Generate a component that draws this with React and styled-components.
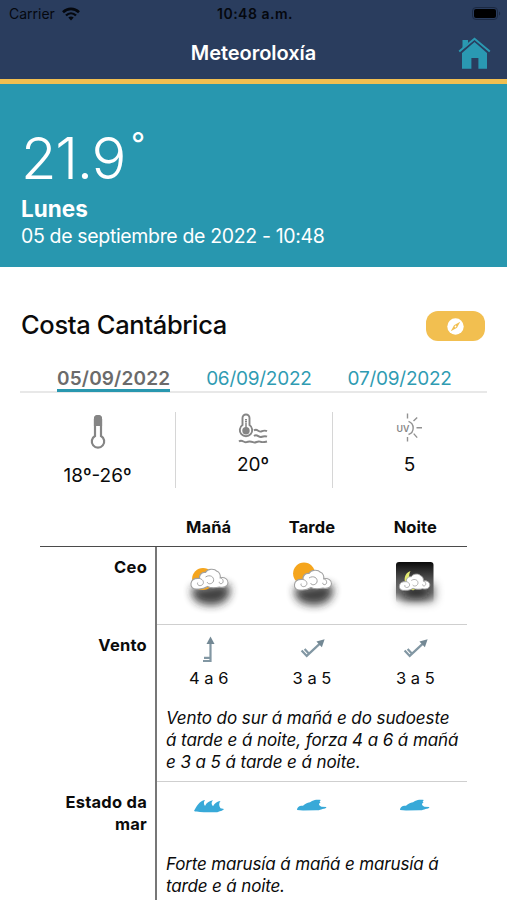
import React from "react";
import styled, { createGlobalStyle } from "styled-components";

const GlobalStyle = createGlobalStyle`
  * {
    box-sizing: border-box;
  }

  body {
    margin: 0;
    background: #fff;
    color: #0b0b0b;
    font-family: Inter, "Liberation Sans", sans-serif;
  }

  h1, h2, p {
    margin: 0;
  }

  svg {
    display: block;
  }
`;

const Screen = styled.div`
  width: 507px;
  height: 900px;
  overflow: hidden;
  background: #fff;
`;

const Header = styled.header`
  height: 84px;
  background: #2a3d5e;
  border-bottom: 5px solid #f2bf50;
`;

const StatusBar = styled.div`
  display: grid;
  grid-template-columns: 1fr auto 1fr;
  align-items: center;
  height: 27px;
  padding: 0 6px 0 9px;
  color: #05080e;
  font-size: 14px;
  line-height: 27px;

  strong {
    font-weight: 600;
    letter-spacing: 0.5px;
  }

  .carrier {
    display: flex;
    align-items: center;
    gap: 7px;
  }

  .battery {
    justify-self: end;
  }
`;

const NavBar = styled.div`
  display: grid;
  grid-template-columns: 1fr auto 1fr;
  align-items: center;
  height: 52px;
  padding: 0 16px;
`;

const NavTitle = styled.h1`
  grid-column: 2;
  color: #fff;
  font-size: 20px;
  font-weight: 600;
  letter-spacing: -0.05px;
`;

const HomeLink = styled.a`
  justify-self: end;
`;

const Hero = styled.section`
  height: 183px;
  padding: 40px 21px 0;
  background: #2897af;
  color: #fff;
`;

const Temperature = styled.div`
  display: flex;
  align-items: flex-start;
  height: 71px;
  font-size: 58px;
  font-weight: 300;
  line-height: 69px;
  letter-spacing: -1.3px;

  sup {
    margin-left: 6px;
    font-size: 31px;
    font-weight: 400;
    line-height: 40px;
  }
`;

const Weekday = styled.p`
  font-size: 22.5px;
  font-weight: 700;
  line-height: 27px;
`;

const Today = styled.p`
  padding-top: 1px;
  font-size: 19.5px;
  line-height: 27px;
  letter-spacing: -0.35px;
`;

const Area = styled.div`
  display: flex;
  align-items: center;
  justify-content: space-between;
  height: 60px;
  margin-top: 29px;
  padding: 0 22px 0 21px;
`;

const AreaName = styled.h2`
  padding-bottom: 3px;
  font-size: 25.5px;
  font-weight: 500;
  letter-spacing: -0.35px;
`;

const CompassButton = styled.button`
  display: flex;
  align-items: center;
  justify-content: center;
  width: 59px;
  height: 30px;
  padding: 0;
  border: 0;
  border-radius: 12px;
  background: #f2bf50;
`;

const Tabs = styled.nav`
  display: flex;
  height: 37px;
  margin: 0 20px;
  padding: 8px 0 0 37px;
  border-bottom: 2px solid #e8e8e8;
`;

const Tab = styled.a`
  height: 28px;
  margin-right: 36px;
  border-bottom: 3px solid ${({ $active }) => ($active ? "#2897af" : "transparent")};
  color: ${({ $active }) => ($active ? "#6b6b6b" : "#2f9bb2")};
  font-size: 19px;
  font-weight: ${({ $active }) => ($active ? 600 : 400)};
  line-height: 29px;
  letter-spacing: ${({ $active }) => ($active ? "0.15px" : "-0.25px")};
  white-space: nowrap;
`;

const Summary = styled.div`
  display: grid;
  grid-template-columns: 156px 157px 1fr;
  height: 76px;
  margin: 19px 20px 0;
`;

const SummaryItem = styled.div`
  display: flex;
  flex-direction: column;
  align-items: center;
  padding-right: ${({ $inset }) => $inset || 0}px;
  font-size: 19px;
  line-height: 24px;
  border-right: ${({ $last }) => ($last ? "0" : "1px solid #d6d6d6")};

  svg {
    margin-bottom: ${({ $gap }) => $gap}px;
  }
`;

const Forecast = styled.div`
  width: 427px;
  margin: 19px 0 0 40px;
`;

const TableHead = styled.div`
  display: grid;
  grid-template-columns: 117px repeat(3, 1fr);
  height: 40px;
  border-bottom: 1px solid #4b4b4b;
  font-size: 16.5px;
  font-weight: 700;
  line-height: 40px;
  letter-spacing: 0.1px;
  text-align: center;
`;

const TableRow = styled.div`
  display: grid;
  grid-template-columns: 117px 1fr;
  height: ${({ $height }) => $height}px;
`;

const RowLabel = styled.div`
  padding: 9px 8px 0 0;
  border-right: 2px solid #777;
  font-size: 16.5px;
  font-weight: 700;
  line-height: 22px;
  letter-spacing: 0.25px;
  text-align: right;
`;

const RowBody = styled.div`
  border-bottom: 1px solid #cfcfcf;
`;

const Periods = styled.div`
  display: grid;
  grid-template-columns: repeat(3, 1fr);
  justify-items: center;
  padding-top: ${({ $top }) => $top}px;
`;

const Period = styled.div`
  display: flex;
  flex-direction: column;
  align-items: center;
  font-size: 16.5px;
  line-height: 22px;
`;

const Note = styled.p`
  margin: ${({ $top }) => $top}px 0 0 9px;
  font-size: 17px;
  font-style: italic;
  line-height: 22px;
  letter-spacing: ${({ $spacing }) => $spacing}px;
  white-space: nowrap;
`;

const WifiIcon = () => (
  <svg width="18" height="14" viewBox="0 0 18 14" fill="none" stroke="#05080e">
    <path d="M1 5.2c4.6-4.5 11.400-4.500 16 0" strokeWidth="2.600" />
    <path d="M4 8.500c3-2.900 7-2.900 10 0" strokeWidth="2.400" />
    <path d="M6.300 10.600c1.600-1.500 3.800-1.500 5.400 0L9 13.400z" fill="#05080e" stroke="none" />
  </svg>
);

const BatteryIcon = () => (
  <svg className="battery" width="29" height="13" viewBox="0 0 29 13">
    <rect x="0.500" y="0.500" width="25" height="12" rx="3.500" fill="none" stroke="#1b2942" />
    <rect x="2" y="2" width="22" height="9" rx="2" fill="#000" />
    <path d="M27 4.500c1.600.6 1.600 3.400 0 4z" fill="#1b2942" />
  </svg>
);

const HomeIcon = () => (
  <svg width="33" height="33" viewBox="0 0 33 33" fill="#2a99b2">
    <path d="M4.500 3h5.500v3.300l-5.500 5.300z" />
    <path d="M16.500 5 29 16v15.700h-8.600V21h-7v10.700H4V16z" />
    <path d="M1.200 14.400 16.500 1.700l15.300 12.700" fill="none" stroke="#2a99b2" strokeWidth="2" />
    <path d="M2.500 15.600 16.500 4l14 11.600" fill="none" stroke="#2a3d5e" strokeWidth="0.700" />
  </svg>
);

const CompassIcon = () => (
  <svg width="17" height="17" viewBox="0 0 17 17">
    <circle cx="8.500" cy="8.500" r="8.200" fill="#fff" />
    <path d="m13.200 3.800-3.200 5.900-6.200 3.500 3.200-5.900z" fill="#f2bf50" />
    <circle cx="8.500" cy="8.500" r="0.900" fill="#fff" />
  </svg>
);

const ThermometerIcon = () => (
  <svg width="18" height="38" viewBox="0 0 18 38" fill="none" stroke="#858585" strokeWidth="2.200">
    <path d="M6 24V7a3 3 0 0 1 6 0v17a6.200 6.200 0 1 1-6 0z" />
    <path d="M6 13V7a3 3 0 0 1 6 0v6z" fill="#858585" />
  </svg>
);

const SeaTemperatureIcon = () => (
  <svg width="30" height="32" viewBox="0 0 30 32" fill="none" stroke="#858585" strokeWidth="1.900">
    <path d="M4.500 13V6a3.500 3.500 0 0 1 7 0v7a6.200 6.200 0 1 1-7 0z" />
    <path d="M8 7v9" strokeWidth="2" strokeDasharray="1.500 0.600" />
    <circle cx="8" cy="18.700" r="3.700" fill="#858585" stroke="none" />
    <path d="M16 18.500c3-2.500 4.500 1.800 7 1 2-.8 4-1.400 6-.4" />
    <path d="M16 24c3-2.500 4.500 1.500 7 1 2-.7 4-1.400 6-.4" />
    <path d="M1 29.500c3-2.500 5 1.500 7.500.7 2.500-1.200 4-1 6.500 0 3 1.200 4-1.500 7-.5 2.500 1 4 .6 7-.2" />
  </svg>
);

const UvIcon = () => (
  <svg width="27" height="30" viewBox="0 0 27 30" fill="none" stroke="#929292" strokeWidth="1.400">
    <path d="M12.500 9.300a7 7 0 0 1 0 13.200" />
    <path d="M11.500 1.500v5M11.500 25v4.500M17.500 9l3.700-3.600M20.500 15.800h5.500M17.700 21.600l3.500 4" />
    <text
      x="0.500"
      y="19.500"
      fill="#858585"
      stroke="none"
      fontSize="8.800"
      fontWeight="600"
      fontFamily="Inter, sans-serif"
    >
      UV
    </text>
  </svg>
);

const Cloud = ({ x, y, scale = 1 }) => (
  <g transform={`translate(${x} ${y}) scale(${scale})`} fill="none" stroke="#a2a2a2">
    <path
      d="M7 20.500C2 21 0 18 .5 15 1 11 4.500 9.500 9 10 8.500 5 12.500 3.500 15 4c2-4 9-4.200 11.500-1.200 2.500.7 3.700 4 3.200 6.500C34 8 38 11 37.500 14.500c-.5 4-5 5-8.500 4-3.500.8-8.500 1.200-12-.5-3 2-6 2.800-10 2.500z"
      fill="#fff"
      strokeWidth="1.100"
    />
    <path
      d="M9 10c4 .7 5.300 5 2.200 6.700-2.500 1.300-5-.6-4-2.600M15 8.500c4.500-3 9 0 8 4-.8 3-5.500 3.800-6.300 1.200M29.700 9.300c3 .5 4 4.500 1.600 5.700-1.600.6-2.800-.4-2.500-1.700"
      strokeWidth="1"
    />
  </g>
);

const SkyIcon = ({ type }) => (
  <svg width="60" height="60" viewBox="0 0 60 60">
    <defs>
      <filter id={`blur-${type}`} x="-50%" y="-80%" width="200%" height="260%">
        <feGaussianBlur stdDeviation="4" />
      </filter>
      <linearGradient id="night" x1="0" y1="0" x2="0" y2="1">
        <stop offset="0" stopColor="#0a0a0a" />
        <stop offset="0.450" stopColor="#555" />
        <stop offset="0.750" stopColor="#777" />
        <stop offset="1" stopColor="#888" stopOpacity="0" />
      </linearGradient>
    </defs>
    {type === "night" ? (
      <>
        <rect x="13" y="25" width="38" height="21" rx="6" fill="#555" opacity="0.550" filter="url(#blur-night)" />
        <rect x="11" y="5" width="37.500" height="41" rx="3" fill="url(#night)" />
        <ellipse cx="31" cy="36" rx="14" ry="6" fill="#111" opacity="0.750" filter="url(#blur-night)" />
        <path d="M25.500 14c-6 2-7.500 9-4 14l5-2c-3-4-3-8-1-12z" fill="#e4ea72" />
        <path d="M24 31h8l-4 2.500z" fill="#d3da62" />
        <Cloud x={14} y={16.500} scale={0.82} />
      </>
    ) : (
      <>
        <path
          d="M13 30c10 2 23-5 37-2 4 11-4 20-17 20S11 43 13 30z"
          fill="#222"
          opacity="0.850"
          filter={`url(#blur-${type})`}
        />
        <circle cx={type === "sunny" ? 22 : 24} cy={type === "sunny" ? 16.500 : 22} r="10.900" fill="#f5a51d" />
        <Cloud x={type === "sunny" ? 12 : 11.500} y={type === "sunny" ? 12.500 : 11.500} />
      </>
    )}
  </svg>
);

const WindIcon = ({ angle }) => (
  <svg width="32" height="32" viewBox="0 0 32 32">
    <g transform={angle ? `translate(1 -3) rotate(${angle} 16 16)` : undefined} fill="none" stroke="#8297a3" strokeWidth="2.200">
      <path d="M17.500 8v18H10M17.500 22.800H11" />
      <path d="m17.500 1.500 4 7.500h-8z" fill="#738894" stroke="none" />
    </g>
  </svg>
);

const WaveIcon = ({ rough }) => (
  <svg width="30" height="14" viewBox="0 0 30 14" fill="#38a9d8">
    {rough ? (
      <path d="M0 12C1 10 2 8 4 5.500 6 3 8 1.200 11 1 9.500 3 9.500 5 11 7c1.500-3 4-5.300 8-5.700-2 2.200-1.700 4 0 6 1.500-3 4-5 7.500-5.300-2 2.500-1.500 5 0 7.300L30 10c-.8 1.300-2 1.700-3 2-2 .4-3 1.500-6 1.300-5-.3-10 0-15-.3-2.500-.2-4-.2-6-1z" />
    ) : (
      <path d="M0 11c0-2 1.500-4 4-4.300l2 .1C8 5 10 3.500 13 3.300l2-1.300c3-1.500 6-1.300 9-1-1.500 1-1.700 1.500-.5 2.500-2.500.8-1.500 3.500 1 4.200l5 .2c-.7 1.500-2 1.800-4 2-2 .5-3 1.500-6 1.300L6 11.500z" />
    )}
  </svg>
);

const dates = ["05/09/2022", "06/09/2022", "07/09/2022"];

const winds = [
  { angle: 0, force: "4 a 6" },
  { angle: 47, force: "3 a 5" },
  { angle: 47, force: "3 a 5" },
];

const App = () => {
  return (
    <Screen>
      <GlobalStyle />
      <Header>
        <StatusBar>
          <div className="carrier">
            <span>Carrier</span>
            <WifiIcon />
          </div>
          <strong>10:48 a.m.</strong>
          <BatteryIcon />
        </StatusBar>
        <NavBar>
          <NavTitle>Meteoroloxía</NavTitle>
          <HomeLink>
            <HomeIcon />
          </HomeLink>
        </NavBar>
      </Header>

      <Hero>
        <Temperature>
          21.9<sup>°</sup>
        </Temperature>
        <Weekday>Lunes</Weekday>
        <Today>05 de septiembre de 2022 - 10:48</Today>
      </Hero>

      <Area>
        <AreaName>Costa Cantábrica</AreaName>
        <CompassButton>
          <CompassIcon />
        </CompassButton>
      </Area>

      <Tabs>
        {dates.map((date, index) => (
          <Tab key={date} $active={index === 0}>
            {date}
          </Tab>
        ))}
      </Tabs>

      <Summary>
        <SummaryItem $gap={14}>
          <ThermometerIcon />
          <span>18º-26º</span>
        </SummaryItem>
        <SummaryItem $gap={9} $inset={2}>
          <SeaTemperatureIcon />
          <span>20º</span>
        </SummaryItem>
        <SummaryItem $gap={11} $inset={1} $last>
          <UvIcon />
          <span>5</span>
        </SummaryItem>
      </Summary>

      <Forecast>
        <TableHead>
          <span />
          <span>Mañá</span>
          <span>Tarde</span>
          <span>Noite</span>
        </TableHead>

        <TableRow $height={78}>
          <RowLabel>Ceo</RowLabel>
          <RowBody>
            <Periods $top={10}>
              <SkyIcon type="cloudy" />
              <SkyIcon type="sunny" />
              <SkyIcon type="night" />
            </Periods>
          </RowBody>
        </TableRow>

        <TableRow $height={157}>
          <RowLabel>Vento</RowLabel>
          <RowBody>
            <Periods $top={10}>
              {winds.map((wind, index) => (
                <Period key={index}>
                  <WindIcon angle={wind.angle} />
                  <span>{wind.force}</span>
                </Period>
              ))}
            </Periods>
            <Note $top={18} $spacing={-0.08}>
              Vento do sur á mañá e do sudoeste
              <br />á tarde e á noite, forza 4 a 6 á mañá
              <br />e 3 a 5 á tarde e á noite.
            </Note>
          </RowBody>
        </TableRow>

        <TableRow $height={150}>
          <RowLabel>
            Estado da
            <br />
            mar
          </RowLabel>
          <RowBody>
            <Periods $top={17}>
              <WaveIcon rough />
              <WaveIcon />
              <WaveIcon />
            </Periods>
            <Note $top={40} $spacing={-0.15}>
              Forte marusía á mañá e marusía á
              <br />
              tarde e á noite.
            </Note>
          </RowBody>
        </TableRow>
      </Forecast>
    </Screen>
  );
};

export default App;
